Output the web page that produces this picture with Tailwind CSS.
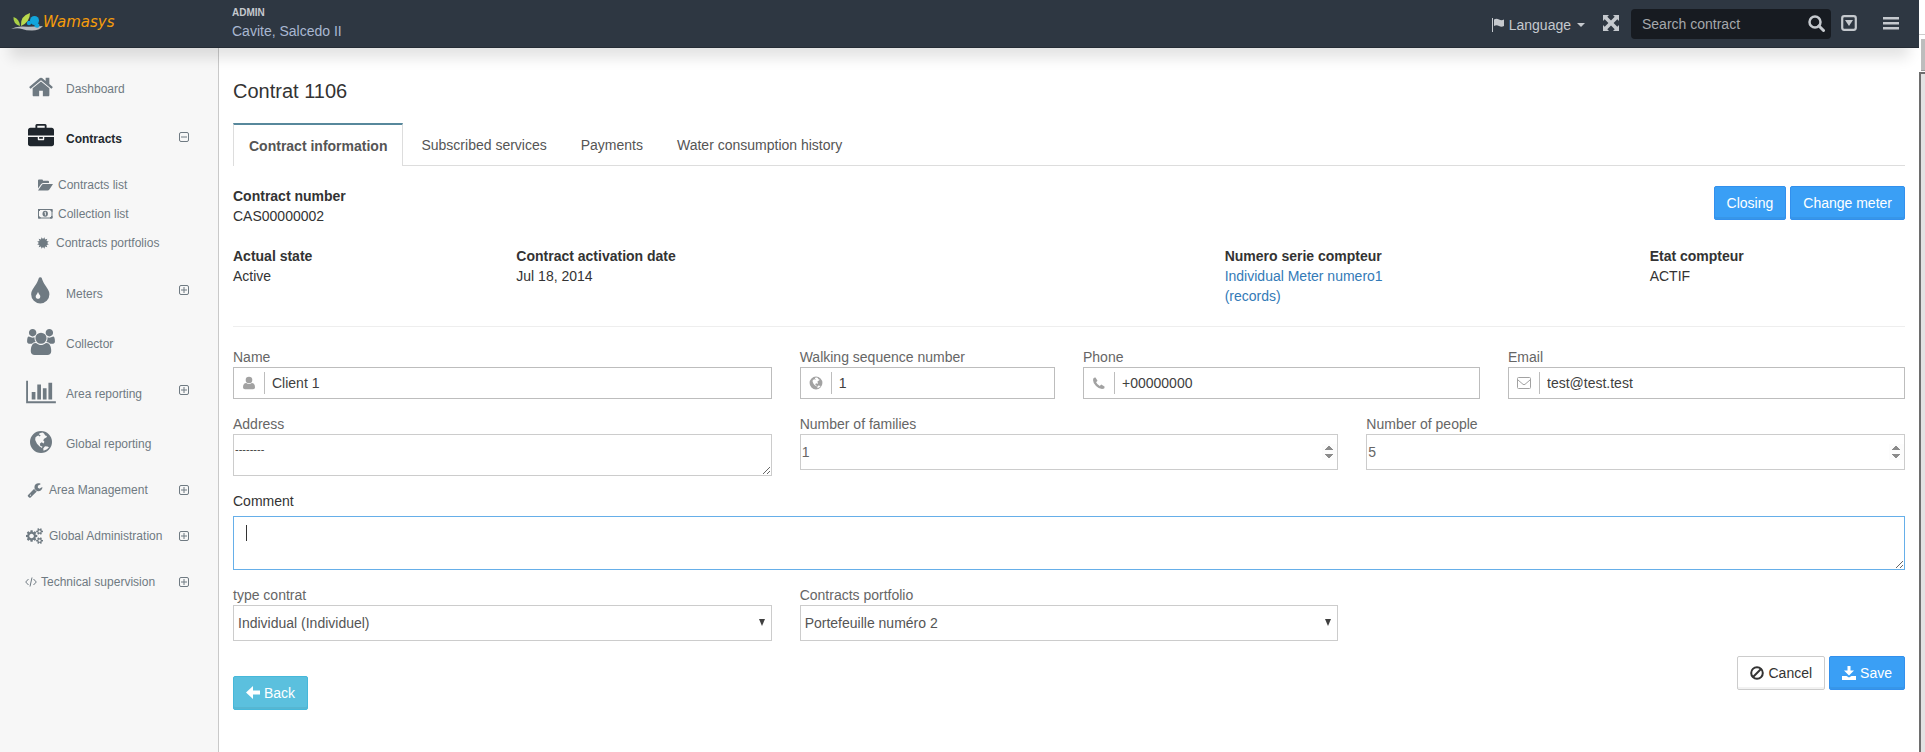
<!DOCTYPE html>
<html lang="en">
<head>
    <meta charset="UTF-8">
    <meta name="viewport" content="width=device-width, initial-scale=1.0">
    <title>Contrat 1106 - Wamasys</title>
    <script src="https://cdn.jsdelivr.net/npm/@tailwindcss/browser@4"></script>
</head>
<body class="flex min-h-screen bg-white font-['Liberation_Sans',Arial,sans-serif] text-sm text-[#333]">

    <!-- Shared icons -->
    <svg class="hidden" aria-hidden="true">
        <symbol id="plus" viewBox="0 0 12 12"><rect x="1.500" y="1.500" width="9" height="9" rx="1.500" fill="none" stroke="currentColor"/><path d="M3 6h6M6 3v6" stroke="currentColor"/></symbol>
        <symbol id="minus" viewBox="0 0 12 12"><rect x="1.500" y="1.500" width="9" height="9" rx="1.500" fill="none" stroke="currentColor"/><path d="M3 6h6" stroke="currentColor"/></symbol>
        <symbol id="globe" viewBox="0 0 24 24">
            <path fill="currentColor" fill-rule="evenodd" d="M12 1a11 11 0 1 0 0 22a11 11 0 0 0 0-22zM10.500 3.200l3-.6 1.500 1 1.200 1.800 1.800.6-.6 1.600-2 1-1.200 1.700 1.200 1.400-.8 1.800-2-1.200-1.800 1.400.6 2.300 2 .6-.4 1.300-2.600-1.600-2.400-2.600-1.800-3.700.2-2.600 1.700-1.400 1.400-.4 1.200.9 1-.9-1.600-1zM16 16.200l2.400.4 1.600.6-2 2-3.400 1.600-.4-2.400z"/>
        </symbol>
    </svg>

    <div class="flex min-w-0 flex-1 flex-col">
        <header class="relative z-10 flex h-12 items-center border-b border-[#252c35] bg-[#2e3742] pb-[2px] text-[#c5c9ce] shadow-[0_20px_14px_-10px_rgba(0,0,0,0.11)]">
            <a href="#" class="flex w-[232px] items-center pl-[11px]">
                <svg class="h-[18px] w-8" viewBox="0 0 32 18">
                    <path d="M0 16q5-3 12-2.500t20-.5q-4 4.500-11 4.500-6 0-10-1.500t-11 0z" fill="#b9bcc0"/>
                    <path d="M9 13q-7-2-6.500-9 6 2 6.500 9z" fill="#a9cf46"/>
                    <path d="M10 13Q9 3 19 0q0 9-9 13z" fill="#b9d84c"/>
                    <circle cx="23.500" cy="7.500" r="4.500" fill="#12a5dc"/>
                    <circle cx="18" cy="10" r="2.200" fill="#12a5dc"/>
                    <path d="M26 10q4 1 1.500 4.500-3 1-4.500-1.500z" fill="#12a5dc"/>
                </svg>
                <span class="font-['DejaVu_Sans',sans-serif] text-[15px] italic text-[#f59c0b]">Wamasys</span>
            </a>
            <div class="flex flex-1 flex-col">
                <span class="text-[10px] leading-4 font-bold">ADMIN</span>
                <span class="leading-5 text-[#a9b7d1]">Cavite, Salcedo II</span>
            </div>
            <button type="button" class="mr-[18px] flex items-center gap-1 pt-1">
                <svg class="h-[14px] w-[14px]" viewBox="0 0 14 14" fill="currentColor"><path d="M1 0h1v14H1zM3 1.500q2.500-1.500 5 0t5 0V8q-2.500 1.500-5 0T3 8z"/></svg>
                <span>Language</span>
                <svg class="ml-[2px] h-1 w-2" viewBox="0 0 8 4" fill="currentColor"><path d="M0 0h8L4 4z"/></svg>
            </button>
            <button type="button" class="mr-3" aria-label="Full screen">
                <svg class="h-4 w-4" viewBox="0 0 16 16" fill="currentColor"><path d="M0 0h6L4.300 1.700 8 5.400l3.700-3.700L10 0h6v6l-1.700-1.700L10.600 8l3.700 3.700L16 10v6h-6l1.700-1.700L8 10.600l-3.700 3.700L6 16H0v-6l1.700 1.700L5.400 8 1.700 4.300 0 6z"/></svg>
            </button>
            <form class="mt-[2px] mr-[10px] flex h-[30px] w-[200px] items-center rounded bg-[#171b21] pr-[6px] pl-[11px]">
                <input type="text" aria-label="Search contract" placeholder="Search contract" class="min-w-0 flex-1 bg-transparent outline-none placeholder:text-[#a5a8ac]">
                <button type="submit" aria-label="Search">
                    <svg class="h-[17px] w-[17px]" viewBox="0 0 17 17" fill="none" stroke="currentColor"><circle cx="7" cy="7" r="5.500" stroke-width="2.500"/><path d="M11 11l4.500 4.500" stroke-width="3" stroke-linecap="round"/></svg>
                </button>
            </form>
            <button type="button" class="mr-[26px]" aria-label="Toggle panel">
                <svg class="h-4 w-4" viewBox="0 0 16 16"><rect x="1.200" y="1.200" width="13.600" height="13.600" rx="2" fill="none" stroke="currentColor" stroke-width="2.200"/><path d="M4 5h8l-4 6z" fill="currentColor"/></svg>
            </button>
            <button type="button" class="mr-5" aria-label="Menu">
                <svg class="h-4 w-4" viewBox="0 0 16 16" fill="currentColor"><path d="M0 2h16v2.500H0zM0 7h16v2.500H0zM0 12h16v2.500H0z"/></svg>
            </button>
        </header>

        <div class="flex flex-1">
            <nav class="w-[219px] shrink-0 border-r border-[#c9c9c9] bg-[#f7f7f7] pt-[14px] text-xs text-[#6f7a82]">
                <ul>
                    <li><a href="#" class="flex h-[50px] items-center pr-7 pl-[26px]">
                        <svg class="mr-[10px] h-[26px] w-[30px]" viewBox="0 0 1792 1792" fill="currentColor"><path d="M1472 992v480q0 26-19 45t-45 19h-384v-384h-256v384h-384q-26 0-45-19t-19-45v-480q0-1 .5-3t.5-3l575-474 575 474q1 2 1 6zm223-69l-62 74q-8 9-21 11h-3q-13 0-21-7l-692-577-692 577q-12 8-24 7-13-2-21-11l-62-74q-8-10-7-23.500t11-21.500l719-599q32-26 76-26t76 26l244 204v-195q0-14 9-23t23-9h192q14 0 23 9t9 23v408l219 182q10 8 11 21.500t-7 23.500z"/></svg>
                        <span class="pt-1">Dashboard</span>
                    </a></li>
                    <li>
                        <a href="#" class="flex h-[50px] items-center pr-7 pl-[26px]">
                            <svg class="mr-[10px] h-[26px] w-[30px] text-[#1f262d]" viewBox="0 0 1792 1792" fill="currentColor"><path d="M640 256h512v-128h-512v128zm1152 640v480q0 66-47 113t-113 47h-1472q-66 0-113-47t-47-113v-480h672v160q0 26 19 45t45 19h320q26 0 45-19t19-45v-160h672zm-768 0v128h-256v-128h256zm768-480v384h-1792v-384q0-66 47-113t113-47h352v-160q0-40 28-68t68-28h576q40 0 68 28t28 68v160h352q66 0 113 47t47 113z"/></svg>
                            <span class="flex-1 pt-1 font-bold text-[#22282e]">Contracts</span>
                            <svg class="h-3 w-3"><use href="#minus"/></svg>
                        </a>
                        <ul class="pt-2 pb-[10px] pl-[37px]">
                            <li><a href="#" class="flex h-[29px] items-center gap-[5px]">
                                <svg class="h-3 w-4" viewBox="0 0 16 12" fill="currentColor"><path d="M1 9.500V1.500Q1 .5 2 .5h3q1 0 1 1.200h5q1 0 1 1V4H6.500Q5 4 4 5.200zM1 11.500l3.600-5.200Q5.200 5 6.500 5H16l-3.600 5.500q-.6 1-1.800 1z"/></svg>
                                <span>Contracts list</span>
                            </a></li>
                            <li><a href="#" class="flex h-[29px] items-center gap-[5px]">
                                <svg class="h-3 w-4" viewBox="0 0 16 12"><rect x="1.500" y="1.500" width="13.500" height="8.500" fill="none" stroke="currentColor"/><path d="M1.500 3.500L3.500 1.500H1.500zM15 3.500L13 1.500H15zM1.500 8L3.500 10H1.500zM15 8L13 10H15z" fill="currentColor" stroke="currentColor"/><ellipse cx="8.200" cy="5.800" rx="2.700" ry="3" fill="currentColor"/><path d="M7.400 4.800l1-.6v3.200" fill="none" stroke="#f7f7f7" stroke-width=".9"/></svg>
                                <span>Collection list</span>
                            </a></li>
                            <li><a href="#" class="flex h-[29px] items-center gap-[7px]">
                                <svg class="h-3 w-3" viewBox="0 0 12 12" fill="currentColor"><path d="M6 1.900L7.500.2l.5 2.300 2.300-.8-.8 2.300 2.300.5L10.100 6l1.700 1.500-2.300.5.8 2.300-2.300-.8-.5 2.300L6 10.100l-1.500 1.700L4 9.500l-2.300.8.8-2.300-2.300-.5L1.900 6 .2 4.500 2.500 4l-.8-2.300 2.300.8.5-2.300z"/></svg>
                                <span>Contracts portfolios</span>
                            </a></li>
                        </ul>
                    </li>
                    <li><a href="#" class="flex h-[50px] items-center pr-7 pl-[26px]">
                        <svg class="mr-[10px] h-8 w-[30px]" viewBox="96 0 1680 1792" fill="currentColor"><path d="M896 1152q0-36-20-69-1-1-15.500-22.500t-25.500-38-25-44-21-50.500q-4-16-21-16t-21 16q-7 23-21 50.500t-25 44-25.500 38-15.500 22.500q-20 33-20 69 0 53 37.500 90.500t90.500 37.500 90.500-37.500 37.500-90.500zm512-128q0 212-150 362t-362 150-362-150-150-362q0-145 81-275 6-9 62.500-90.500t101-151 99.500-178 83-201.500q9-30 34-47t51-17 51.500 17 33.500 47q28 93 83 201.500t99.500 178 101 151 62.500 90.500q81 127 81 275z"/></svg>
                        <span class="flex-1 pt-1">Meters</span>
                        <svg class="mb-1 h-3 w-3"><use href="#plus"/></svg>
                    </a></li>
                    <li><a href="#" class="flex h-[50px] items-center pr-7 pl-[26px]">
                        <svg class="mr-[10px] h-[26px] w-[30px]" viewBox="0 0 1920 1792" fill="currentColor"><path d="M593 896q-162 5-265 128h-134q-82 0-138-40.500t-56-118.500q0-353 124-353 6 0 43.500 21t97.500 42.500 119 21.500q67 0 133-23-5 37-5 66 0 139 81 256zm1071 637q0 120-73 189.500t-194 69.500h-874q-121 0-194-69.500t-73-189.500q0-53 3.500-103.500t14-109 26.500-108.500 43-97.500 62-81 85.500-53.500 111.500-20q10 0 43 21.500t73 48 107 48 135 21.500 135-21.500 107-48 73-48 43-21.500q61 0 111.500 20t85.500 53.500 62 81 43 97.500 26.500 108.500 14 109 3.500 103.500zm-1024-1277q0 106-75 181t-181 75-181-75-75-181 75-181 181-75 181 75 75 181zm704 384q0 159-112.500 271.500t-271.500 112.500-271.500-112.500-112.500-271.500 112.500-271.500 271.500-112.500 271.500 112.500 112.500 271.500zm576 225q0 78-56 118.500t-138 40.500h-134q-103-123-265-128 81-117 81-256 0-29-5-66 66 23 133 23 59 0 119-21.500t97.500-42.500 43.500-21q124 0 124 353zm-128-609q0 106-75 181t-181 75-181-75-75-181 75-181 181-75 181 75 75 181z"/></svg>
                        <span class="pt-1">Collector</span>
                    </a></li>
                    <li><a href="#" class="flex h-[50px] items-center pr-7 pl-[26px]">
                        <svg class="mr-[10px] h-[26px] w-[30px]" viewBox="0 0 2048 1792" fill="currentColor"><path d="M640 896v512h-256v-512h256zm384-512v1024h-256v-1024h256zm1024 1152v128h-2048v-1536h128v1408h1920zm-640-896v768h-256v-768h256zm384-384v1152h-256v-1152h256z"/></svg>
                        <span class="flex-1 pt-1">Area reporting</span>
                        <svg class="mb-1 h-3 w-3"><use href="#plus"/></svg>
                    </a></li>
                    <li><a href="#" class="flex h-[50px] items-center pr-7 pl-[26px]">
                        <svg class="mr-[10px] h-6 w-[30px]"><use href="#globe"/></svg>
                        <span class="pt-1">Global reporting</span>
                    </a></li>
                    <li><a href="#" class="flex h-[46px] items-center pr-7 pl-[27px]">
                        <svg class="mr-[6px] h-4 w-4" viewBox="0 0 1792 1792" fill="currentColor"><path d="M448 1472q0-26-19-45t-45-19-45 19-19 45 19 45 45 19 45-19 19-45zm644-420l-682 682q-37 37-90 37-52 0-91-37l-106-108q-38-36-38-90 0-53 38-91l681-681q39 98 114.500 173.500t173.500 114.500zm634-435q0 39-23 106-47 134-164.500 217.500t-258.500 83.500q-185 0-316.500-131.500t-131.500-316.500 131.500-316.500 316.500-131.500q58 0 121.500 16.500t107.500 46.500q16 11 16 28t-16 28l-293 169v224l193 107q5-3 79-48.500t135.500-81 70.500-35.500q15 0 23.500 10t8.500 25z"/></svg>
                        <span class="flex-1">Area Management</span>
                        <svg class="h-3 w-3"><use href="#plus"/></svg>
                    </a></li>
                    <li><a href="#" class="flex h-[46px] items-center pr-7 pl-[26px]">
                        <svg class="mr-[5px] h-4 w-[18px]" viewBox="0 0 1920 1792" fill="currentColor"><path d="M832 896q0-106-75-181t-181-75-181 75-75 181 75 181 181 75 181-75 75-181zm768 512q0-52-38-90t-90-38-90 38-38 90q0 53 37.500 90.500t90.500 37.500 90.500-37.500 37.500-90.500zm0-1024q0-52-38-90t-90-38-90 38-38 90q0 53 37.500 90.500t90.500 37.500 90.500-37.500 37.500-90.500zm-384 421v185q0 10-7 19.500t-16 10.500l-155 24q-11 35-32 76 34 48 90 115 7 11 7 20 0 12-7 19-23 30-82.500 89.500t-78.500 59.500q-11 0-21-7l-115-90q-37 19-77 31-11 108-23 155-7 24-30 24h-186q-11 0-20-7.500t-10-17.500l-23-153q-34-10-75-31l-118 89q-7 7-20 7-11 0-21-8-144-133-144-160 0-9 7-19 10-14 41-53t47-61q-23-44-35-82l-152-24q-10-1-17-9.500t-7-19.500v-185q0-10 7-19.500t16-10.500l155-24q11-35 32-76-34-48-90-115-7-11-7-20 0-12 7-20 22-30 82-89t79-59q11 0 21 7l115 90q34-18 77-32 11-108 23-154 7-24 30-24h186q11 0 20 7.500t10 17.500l23 153q34 10 75 31l118-89q8-7 20-7 11 0 21 8 144 133 144 160 0 8-7 19-12 16-42 54t-45 60q23 48 34 82l152 23q10 2 17 10.500t7 19.500zm640 533v140q0 16-149 31-12 27-30 52 51 113 51 138 0 4-4 7-122 71-124 71-8 0-46-47t-52-68q-20 2-30 2t-30-2q-14 21-52 68t-46 47q-2 0-124-71-4-3-4-7 0-25 51-138-18-25-30-52-149-15-149-31v-140q0-16 149-31 13-29 30-52-51-113-51-138 0-4 4-7 4-2 35-20t59-34 30-16q8 0 46 46.500t52 67.500q20-2 30-2t30 2q51-71 92-112l6-2q4 0 124 70 4 3 4 7 0 25-51 138 17 23 30 52 149 15 149 31zm0-1024v140q0 16-149 31-12 27-30 52 51 113 51 138 0 4-4 7-122 71-124 71-8 0-46-47t-52-68q-20 2-30 2t-30-2q-14 21-52 68t-46 47q-2 0-124-71-4-3-4-7 0-25 51-138-18-25-30-52-149-15-149-31v-140q0-16 149-31 13-29 30-52-51-113-51-138 0-4 4-7 4-2 35-20t59-34 30-16q8 0 46 46.500t52 67.500q20-2 30-2t30 2q51-71 92-112l6-2q4 0 124 70 4 3 4 7 0 25-51 138 17 23 30 52 149 15 149 31z"/></svg>
                        <span class="flex-1">Global Administration</span>
                        <svg class="h-3 w-3"><use href="#plus"/></svg>
                    </a></li>
                    <li><a href="#" class="flex h-[46px] items-center pr-7 pl-[25px]">
                        <svg class="mr-1 h-3 w-3" viewBox="0 0 12 12" fill="none" stroke="currentColor"><path d="M3.500 3L.7 6l2.800 3M8.500 3l2.800 3-2.800 3M7 1.500l-2 9"/></svg>
                        <span class="flex-1">Technical supervision</span>
                        <svg class="h-3 w-3"><use href="#plus"/></svg>
                    </a></li>
                </ul>
            </nav>

            <main class="min-w-0 flex-1 px-[14px] pt-7 pb-8">
                <h1 class="text-xl leading-[30px]">Contrat 1106</h1>

                <div class="mt-[17px] flex h-[43px] gap-[2px] border-b border-[#ddd] text-[#555]">
                    <a href="#" class="-mb-px flex items-center border border-t-2 border-b-0 border-[#ddd] border-t-[#57889c] bg-white px-[15px] font-bold">Contract information</a>
                    <a href="#" class="flex items-center px-4 pt-[2px]">Subscribed services</a>
                    <a href="#" class="flex items-center px-4 pt-[2px]">Payments</a>
                    <a href="#" class="flex items-center px-4 pt-[2px]">Water consumption history</a>
                </div>

                <div class="mt-5 flex justify-between">
                    <div>
                        <div class="font-bold">Contract number</div>
                        <div>CAS00000002</div>
                    </div>
                    <div class="flex items-start gap-1">
                        <button type="button" class="h-[34px] rounded-xs border border-[#3290ed] bg-[#3a9ff5] px-3 text-white shadow-[inset_0_-2px_0_rgba(0,0,0,0.05)]">Closing</button>
                        <button type="button" class="h-[34px] rounded-xs border border-[#3290ed] bg-[#3a9ff5] px-3 text-white shadow-[inset_0_-2px_0_rgba(0,0,0,0.05)]">Change meter</button>
                    </div>
                </div>

                <div class="mt-5 grid grid-cols-12 gap-x-7 border-b border-[#eee] pb-5">
                    <div class="col-span-2">
                        <div class="font-bold">Actual state</div>
                        <div>Active</div>
                    </div>
                    <div class="col-span-5">
                        <div class="font-bold">Contract activation date</div>
                        <div>Jul 18, 2014</div>
                    </div>
                    <div class="col-span-3">
                        <div class="font-bold">Numero serie compteur</div>
                        <a href="#" class="block text-[#337ab7]">Individual Meter numero1</a>
                        <a href="#" class="block text-[#337ab7]">(records)</a>
                    </div>
                    <div class="col-span-2">
                        <div class="font-bold">Etat compteur</div>
                        <div>ACTIF</div>
                    </div>
                </div>

                <form class="mt-5 text-[#666]">
                    <div class="grid grid-cols-12 gap-x-7">
                        <div class="col-span-4">
                            <label for="name" class="block">Name</label>
                            <div class="flex h-8 items-center border border-[#bdbdbd]">
                                <svg class="mx-[7px] h-4 w-4 text-[#a2a2a2]" viewBox="0 0 16 16" fill="currentColor"><circle cx="8" cy="5" r="3.300"/><path d="M2 12.500q0-4.500 3.200-4.500Q8 10 10.800 8 14 8 14 12.500q0 1.800-2 1.800H4q-2 0-2-1.800z"/></svg>
                                <input id="name" type="text" value="Client 1" class="h-[22px] min-w-0 flex-1 border-l border-[#bdbdbd] px-[7px] text-[#404040] outline-none">
                            </div>
                        </div>
                        <div class="col-span-2">
                            <label for="sequence" class="block">Walking sequence number</label>
                            <div class="flex h-8 items-center border border-[#bdbdbd]">
                                <svg class="mx-[7px] h-[14px] w-4 text-[#a2a2a2]"><use href="#globe"/></svg>
                                <input id="sequence" type="text" value="1" class="h-[22px] min-w-0 flex-1 border-l border-[#bdbdbd] px-[7px] text-[#404040] outline-none">
                            </div>
                        </div>
                        <div class="col-span-3">
                            <label for="phone" class="block">Phone</label>
                            <div class="flex h-8 items-center border border-[#bdbdbd]">
                                <svg class="mx-[7px] h-4 w-4 text-[#a2a2a2]" viewBox="0 0 16 16" fill="currentColor"><path d="M4.500 2.500l2 3.300-1.400 1.400q1.200 2.500 3.700 3.700l1.400-1.400 3.300 2q.5 2.500-2.500 2.500Q8 14 5 11T2 5q0-3 2.500-2.500z"/></svg>
                                <input id="phone" type="tel" value="+00000000" class="h-[22px] min-w-0 flex-1 border-l border-[#bdbdbd] px-[7px] text-[#404040] outline-none">
                            </div>
                        </div>
                        <div class="col-span-3">
                            <label for="email" class="block">Email</label>
                            <div class="flex h-8 items-center border border-[#bdbdbd]">
                                <svg class="mx-[7px] h-4 w-4 text-[#a2a2a2]" viewBox="0 0 16 16" fill="none" stroke="currentColor"><rect x="1.500" y="2.500" width="13" height="11" rx="1"/><path d="M2 5l5 4.300q1 .7 2 0L14 5"/></svg>
                                <input id="email" type="email" value="test@test.test" class="h-[22px] min-w-0 flex-1 border-l border-[#bdbdbd] px-[7px] text-[#404040] outline-none">
                            </div>
                        </div>
                    </div>

                    <div class="mt-[15px] grid grid-cols-12 gap-x-7">
                        <div class="col-span-4">
                            <label for="address" class="block">Address</label>
                            <textarea id="address" class="block h-[42px] w-full border border-[#ccc] px-px pt-1 text-[11px] leading-5 text-[#404040] outline-none">--------</textarea>
                        </div>
                        <div class="col-span-4">
                            <label for="families" class="block">Number of families</label>
                            <input id="families" type="number" value="1" class="block h-9 w-full border border-[#ccc] pl-px outline-none [&::-webkit-inner-spin-button]:opacity-100">
                        </div>
                        <div class="col-span-4">
                            <label for="people" class="block">Number of people</label>
                            <input id="people" type="number" value="5" class="block h-9 w-full border border-[#ccc] pl-px outline-none [&::-webkit-inner-spin-button]:opacity-100">
                        </div>
                    </div>

                    <div class="relative mt-[15px]">
                        <label for="comment" class="mb-[5px] block text-[#333]">Comment</label>
                        <textarea id="comment" class="block h-[54px] w-full border border-[#66afe9] px-3 py-[6px] caret-transparent outline-none"></textarea>
                        <!-- text cursor -->
                        <span class="absolute top-[34px] left-[13px] h-4 w-px bg-[#333]"></span>
                    </div>

                    <div class="mt-[15px] grid grid-cols-12 gap-x-7">
                        <div class="col-span-4">
                            <label for="type" class="block">type contrat</label>
                            <div class="relative">
                                <select id="type" class="block h-9 w-full appearance-none border border-[#ccc] bg-white px-1 text-[#555] outline-none"><option>Individual (Individuel)</option></select>
                                <svg class="pointer-events-none absolute top-[14px] right-[7px] h-[7px] w-[6px]" viewBox="0 0 6 7" fill="#404040"><path d="M0 0h6L3 7z"/></svg>
                            </div>
                        </div>
                        <div class="col-span-4">
                            <label for="portfolio" class="block">Contracts portfolio</label>
                            <div class="relative">
                                <select id="portfolio" class="block h-9 w-full appearance-none border border-[#ccc] bg-white px-1 text-[#555] outline-none"><option>Portefeuille numéro 2</option></select>
                                <svg class="pointer-events-none absolute top-[14px] right-[7px] h-[7px] w-[6px]" viewBox="0 0 6 7" fill="#404040"><path d="M0 0h6L3 7z"/></svg>
                            </div>
                        </div>
                    </div>

                    <div class="mt-[15px] flex items-start justify-between">
                        <button type="button" class="mt-5 flex h-[34px] items-center gap-1 rounded-xs border border-[#46b8da] bg-[#5bc0de] px-3 text-white shadow-[inset_0_-2px_0_rgba(0,0,0,0.05)]">
                            <svg class="h-[14px] w-[14px]" viewBox="0 0 14 14" fill="currentColor"><path d="M0 6.500L7 0v4.500h7v4H7V13z"/></svg>
                            Back
                        </button>
                        <div class="flex gap-1">
                            <button type="button" class="flex h-[34px] items-center gap-1 rounded-xs border border-[#ccc] bg-white px-3 text-[#333] shadow-[inset_0_-2px_0_rgba(0,0,0,0.05)]">
                                <svg class="h-[14px] w-[14px]" viewBox="0 0 14 14" fill="none" stroke="currentColor" stroke-width="2"><circle cx="7" cy="7" r="5.800"/><path d="M3 11l8-8"/></svg>
                                Cancel
                            </button>
                            <button type="submit" class="flex h-[34px] items-center gap-1 rounded-xs border border-[#3290ed] bg-[#3a9ff5] px-3 text-white shadow-[inset_0_-2px_0_rgba(0,0,0,0.05)]">
                                <svg class="h-[14px] w-[14px]" viewBox="0 0 14 14" fill="currentColor"><path d="M5.500 0h3v4.500h3.500L7 9.500 2 4.500h3.500zM0 10h4.500L7 11.500 9.500 10H14v4H0z"/></svg>
                                Save
                            </button>
                        </div>
                    </div>
                </form>
            </main>
        </div>
    </div>

    <!-- Edge of the window frame -->
    <div class="flex w-[6px] shrink-0 flex-col">
        <div class="h-[35px] border-b border-[#ccc] bg-white"></div>
        <div class="mt-1 ml-[2px] h-8 border-b border-[#999] bg-[#bdbdbd]"></div>
        <div class="mt-px flex-1 border-t-2 border-l-2 border-[#6e6e6e] bg-[#e3e3e3]"></div>
    </div>
</body>
</html>
